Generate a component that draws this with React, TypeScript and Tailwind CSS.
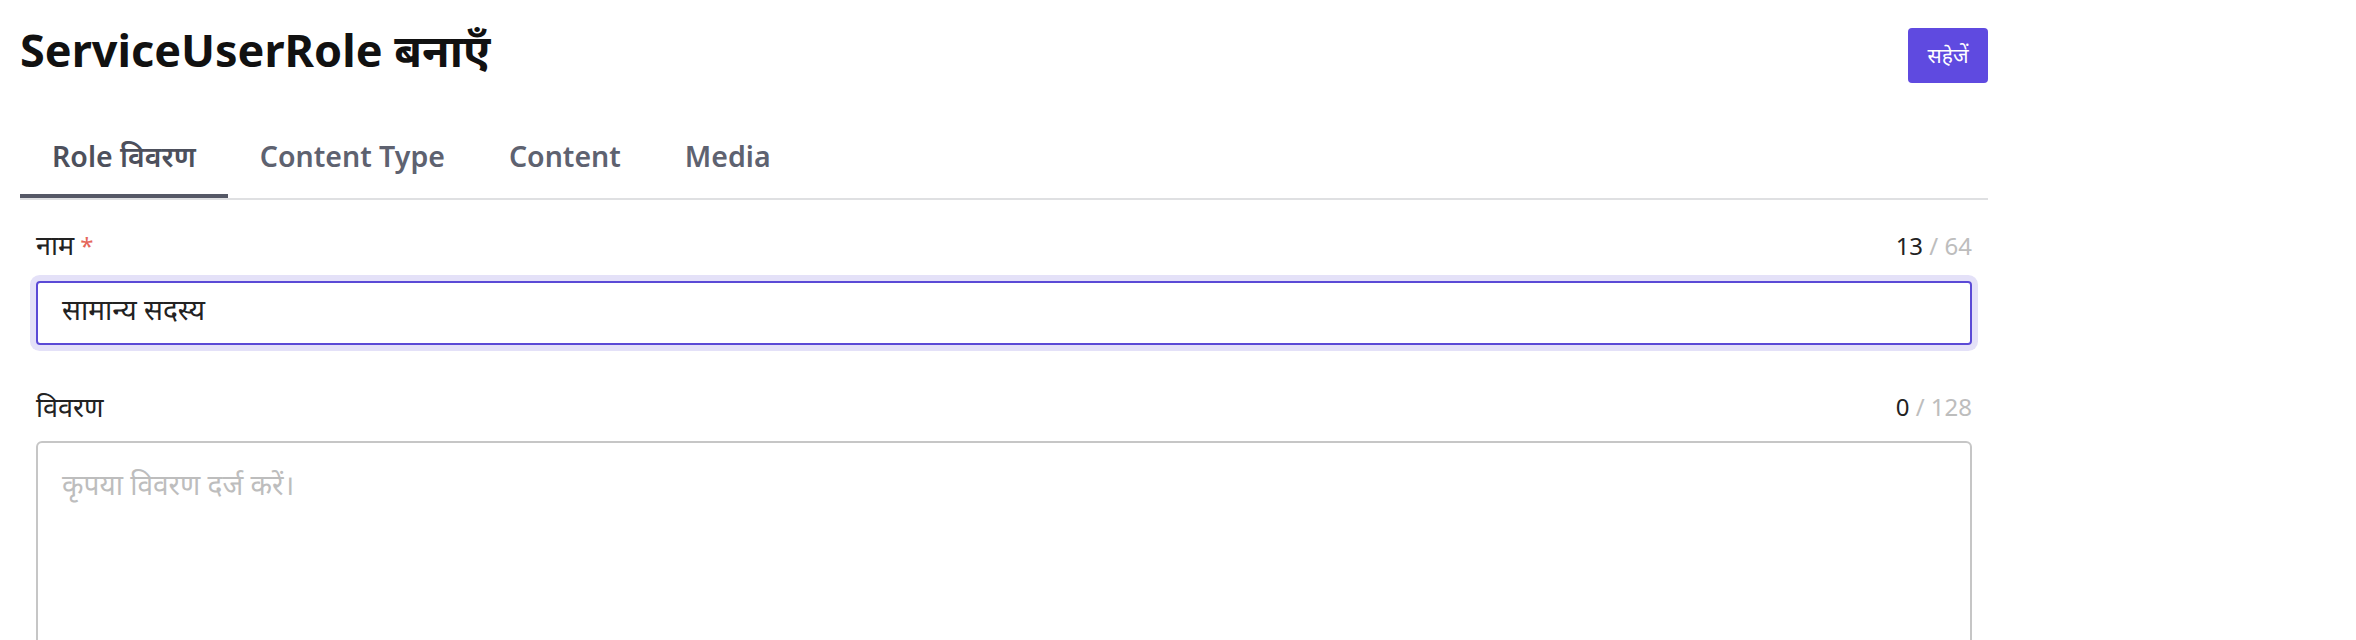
import React from "react";

const tabs = ["Role विवरण", "Content Type", "Content", "Media"];

function Counter({ used, max }: { used: number; max: number }) {
  return (
    <span className="text-[24px] leading-[34px]">
      <span className="text-[#222222]">{used}</span>
      <span className="text-[#bdbdbd]"> / {max}</span>
    </span>
  );
}

export default function App() {
  return (
    <div className="min-h-[640px] bg-white font-['Noto_Sans','Noto_Sans_Devanagari',sans-serif]">
      <div className="ml-[20px] w-[1968px]">
        {/* header */}
        <div className="flex items-start justify-between">
          <h1 className="mt-[16px] text-[45px] font-bold leading-[68px] text-[#111111]">
            ServiceUserRole बनाएँ
          </h1>
          <button className="mt-[28px] flex h-[55px] w-[80px] items-center justify-center rounded-[4px] bg-[#5f4ae0] text-[21px] text-white">
            सहेजें
          </button>
        </div>

        {/* tabs */}
        <div className="mt-[26px] flex border-b-2 border-[#dfe0e2]">
          {tabs.map((t, i) => (
            <div
              key={t}
              className={`flex h-[88px] items-center border-b-4 px-[32px] pt-[8px] text-[28.5px] font-semibold leading-[40px] ${
                i === 0 ? "border-[#555866] text-[#4d505c]" : "border-transparent text-[#5e6270]"
              }`}
            >
              {t}
            </div>
          ))}
        </div>

        {/* form */}
        <div className="px-[16px] pt-[28px]">
          <div className="flex items-center justify-between">
            <label className="text-[27px] leading-[34px] text-[#222222]">
              नाम<span className="ml-[6px] text-[24px] text-[#e5675b]">*</span>
            </label>
            <Counter used={13} max={64} />
          </div>
          <div className="mt-[18px] flex h-[64px] items-center rounded-[4px] border-2 border-[#5b4ad6] px-[24px] pb-[8px] text-[28px] leading-[34px] text-[#222222] shadow-[0_0_0_6px_#e4e1f8]">
            सामान्य सदस्य
          </div>

          <div className="mt-[45px] flex items-center justify-between">
            <label className="text-[27px] leading-[34px] text-[#222222]">विवरण</label>
            <Counter used={0} max={128} />
          </div>
          <div className="mt-[17px] h-[240px] rounded-[6px] border-2 border-[#c6c6c6] px-[24px] pt-[24px] text-[28px] leading-[34px] text-[#bdbdbd]">
            कृपया विवरण दर्ज करें।
          </div>
        </div>
      </div>
    </div>
  );
}
